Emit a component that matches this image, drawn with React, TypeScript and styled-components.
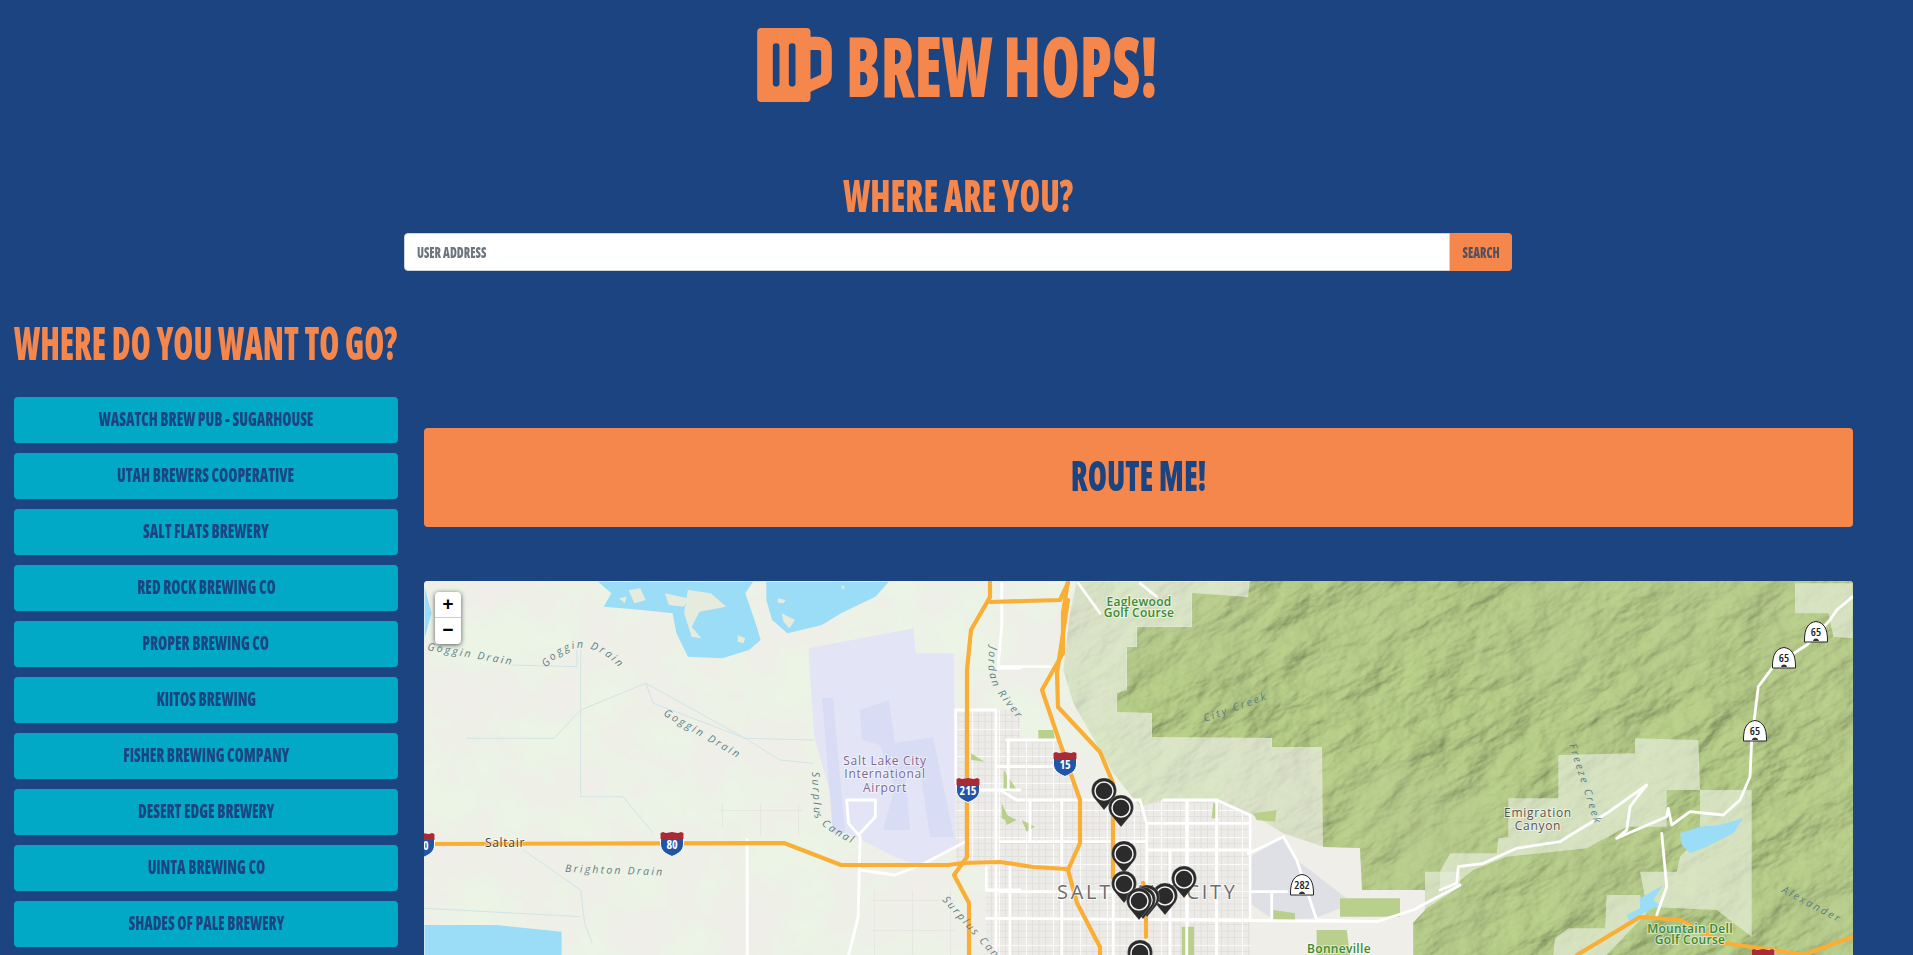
import styled, { createGlobalStyle } from "styled-components";

const NAVY = "#1b4480";
const ORANGE = "#f6874c";
const TEAL = "#01a9c7";

const GlobalStyle = createGlobalStyle`
  html, body {
    margin: 0;
    height: 955px;
    overflow: hidden;
    background: ${NAVY};
  }
  * { box-sizing: border-box; }
`;

const Page = styled.div`
  width: 1913px;
  height: 955px;
  overflow: hidden;
  background: ${NAVY};
  font-family: "Open Sans", "Liberation Sans", sans-serif;
  font-stretch: 75%;
  font-weight: 800;
`;

// no narrow display face on this machine, so squeeze the condensed one a bit more
const Condensed = styled.span<{ $x?: number; $origin?: string }>`
  display: inline-block;
  white-space: nowrap;
  transform: scaleX(${(p) => p.$x ?? 0.74});
  transform-origin: ${(p) => p.$origin ?? "center"};
`;

const Header = styled.header`
  display: flex;
  justify-content: center;
  align-items: center;
  padding-top: 28px;
  height: 102px;
  color: ${ORANGE};
`;

const Logo = styled.svg`
  width: 75px;
  height: 74px;
  flex: none;
  margin-right: 14px;
`;

const Title = styled.h1`
  margin: 0 2px 0 0;
  width: 308px;
  font-size: 84px;
  line-height: 74px;
  font-weight: 800;
  text-align: left;
`;

const AddressSection = styled.section`
  margin: 73px 0 0 404px;
  width: 1108px;
`;

const AddressTitle = styled.h2`
  margin: 0 0 19px;
  height: 39px;
  color: ${ORANGE};
  font-size: 45px;
  line-height: 39px;
  font-weight: 800;
  text-align: center;
  transform: translateX(0);
`;

const InputGroup = styled.div`
  display: flex;
  height: 38px;
`;

const AddressBox = styled.div`
  flex: 1;
  display: flex;
  align-items: center;
  padding: 0 12px 1px;
  background: #fff;
  border: 1px solid #ced4da;
  border-radius: 4px 0 0 4px;
  color: #6c757d;
  font-size: 16px;
`;

const SearchButton = styled.button`
  width: 62px;
  padding: 0 0 1px;
  border: 0;
  background: ${ORANGE};
  border-radius: 0 4px 4px 0;
  color: #555059;
  font: inherit;
  font-size: 16px;
`;

const Main = styled.main`
  display: grid;
  grid-template-columns: 384px 1429px;
  column-gap: 26px;
  padding-left: 14px;
  margin-top: 48px;
`;

const Sidebar = styled.aside`
  display: flex;
  flex-direction: column;
`;

const SideTitle = styled.h2`
  margin: 0 0 32px;
  height: 46px;
  color: ${ORANGE};
  font-size: 46px;
  line-height: 46px;
  font-weight: 800;
`;

const BreweryList = styled.div`
  display: flex;
  flex-direction: column;
  gap: 10px;
`;

const BreweryButton = styled.button`
  flex: none;
  height: 46px;
  padding: 0 0 3px;
  border: 0;
  border-radius: 4px;
  background: ${TEAL};
  color: ${NAVY};
  font: inherit;
  font-size: 20px;
`;

const Content = styled.div`
  padding-top: 109px;
  display: flex;
  flex-direction: column;
`;

const RouteButton = styled.button`
  height: 99px;
  margin-bottom: 54px;
  padding: 0 0 6px;
  border: 0;
  border-radius: 4px;
  background: ${ORANGE};
  color: ${NAVY};
  font: inherit;
  font-size: 42px;
`;

const MapFrame = styled.div`
  position: relative;
  height: 500px;
  border-radius: 4px;
  overflow: hidden;
  background: #efeee9;
`;

const MapSvg = styled.svg`
  display: block;
  width: 1429px;
  height: 500px;
`;

const ZoomControl = styled.div`
  position: absolute;
  left: 11px;
  top: 11px;
  width: 26px;
  border-radius: 4px;
  background: #fff;
  box-shadow: 0 1px 5px rgba(0, 0, 0, 0.65);
`;

const ZoomButton = styled.div<{ $last?: boolean }>`
  height: 26px;
  display: flex;
  align-items: center;
  justify-content: center;
  color: #000;
  font: 700 19px "Liberation Mono", monospace;
  border-bottom: ${(p) => (p.$last ? "none" : "1px solid #ccc")};
`;

const Road = styled.polyline<{ $w: number; $c: string }>`
  fill: none;
  stroke: ${(p) => p.$c};
  stroke-width: ${(p) => p.$w};
  stroke-linejoin: round;
  stroke-linecap: round;
`;

const WaterLabel = styled.text`
  font: italic 400 10.5px "Open Sans", sans-serif;
  letter-spacing: 2.2px;
  fill: #5f7f86;
`;

const PlaceLabel = styled.text<{ $c?: string; $bold?: boolean }>`
  font: ${(p) => (p.$bold ? 600 : 400)} 12px "Open Sans", sans-serif;
  letter-spacing: ${(p) => (p.$bold ? 0.3 : 0.7)}px;
  fill: ${(p) => p.$c ?? "#555"};
  text-anchor: middle;
  paint-order: stroke;
  stroke: rgba(255, 255, 255, 0.55);
  stroke-width: 2px;
`;

const CityLabel = styled.text`
  font: 400 20px "Open Sans", sans-serif;
  fill: #6d6d6d;
  paint-order: stroke;
  stroke: rgba(255, 255, 255, 0.7);
  stroke-width: 2px;
`;

const breweries = [
  "Wasatch Brew Pub - Sugarhouse",
  "Utah Brewers Cooperative",
  "Salt Flats Brewery",
  "Red Rock Brewing Co",
  "Proper Brewing Co",
  "Kiitos Brewing",
  "Fisher Brewing Company",
  "Desert Edge Brewery",
  "Uinta Brewing Co",
  "Shades of Pale Brewery",
];

// traced from crops of the map, so each helper maps crop px to page px
const crop = (ox: number, oy: number, sx = 3) => (s: string) =>
  s
    .trim()
    .split(/\s+/)
    .map((pair) => {
      const [x, y] = pair.split(",").map(Number);
      return `${(ox + x / sx).toFixed(1)},${(oy + y / 3).toFixed(1)}`;
    })
    .join(" ");
const z3 = crop(420, 570, 2.613);
const z4 = crop(1000, 570);
const z5 = crop(1440, 570);

const water = [
  z3("465,35 700,35 870,35 850,70 880,170 890,210 860,240 790,265 700,260 670,190 660,130 580,120 480,110 500,70"),
  z3("905,35 1225,35 1190,80 1100,130 1050,165 960,190 920,150 905,90"),
  z3("12,50 30,130 12,205"),
  z3("12,1065 200,1065 370,1085 370,1155 12,1155"),
  z5("720,790 780,770 840,765 910,745 880,790 800,830 750,850 725,825"),
  z5("600,985 670,945 640,990 660,1005 600,1035 570,1055 560,1035 600,1015"),
];

const islands = [
  z3("545,60 575,55 590,90 560,100"),
  z3("640,70 700,85 690,110 650,105"),
  z3("700,60 760,70 800,110 730,125 710,170 735,205 710,200 690,130"),
  z3("830,195 850,205 845,220 830,215"),
  z3("935,85 955,90 950,100 935,98"),
  z3("945,130 980,150 965,175 950,155"),
  z3("520,85 540,80 535,100"),
  z3("1100,45 1110,50 1105,60"),
];

const mountains =
  "1250,581 1248,597 1192,593 1192,627 1137,627 1137,647 1127,647 1127,690 1117,693 1117,712 1152,713 1152,737 1272,738 1272,747 1322,747 1323,847 1360,848 1362,890 1425,890 1425,910 1413,923 1413,955 1853,955 1853,581";

const foothills = z4(
  "230,35 750,35 745,80 575,70 575,170 410,170 410,230 380,230 380,360 350,370 350,425 455,430 455,500 815,505 815,530 965,530 970,830 850,790 750,730 640,690 490,690 420,710 340,610 220,400 190,300 210,130"
);

const lightPatches = [
  z5("0,905 30,850 170,850 175,805 205,800 205,685 355,685 355,555 585,550 585,505 775,510 780,660 680,660 680,770 560,770 440,835 200,860 100,900 50,940 0,955"),
  z5("780,660 935,660 935,1100 830,1020 620,1010 600,905 710,905 720,860 780,800"),
  z5("500,975 600,975 620,1030 500,1155 340,1155 345,1105 385,1075 495,1075"),
  z5("1065,40 1238,40 1238,205 1180,200 1165,130 1065,130"),
  z4("1020,980 1275,960 1275,905 1380,905 1380,950 1240,1040 1240,1155 1100,1155 1020,1060"),
];

const cityBlocks = [
  z4("20,510 170,510 240,690 420,710 490,690 650,690 750,735 750,1155 0,1155 0,590"),
  z3("1400,420 1568,420 1568,1155 1480,1155 1480,890 1400,890"),
];

const sparseLots = [
  z3("780,700 1000,700 1000,800 850,800 850,770 780,770"),
  z3("1180,960 1400,960 1400,1155 1180,1155"),
];

const parks = [
  z4("115,480 160,480 165,510 115,510"),
  z4("640,700 655,700 655,745 635,745"),
  z4("760,730 830,720 825,755 770,750"),
  z4("545,1070 582,1070 582,1155 545,1155"),
  z4("820,1020 885,1030 885,1050 820,1050"),
  z4("1020,985 1200,985 1200,1040 1020,1040"),
  z3("1440,550 1475,575 1440,570"),
  z3("1525,600 1560,660 1525,670"),
  z3("1520,700 1545,760 1520,745"),
  z4("950,1080 1040,1080 1050,1155 950,1155"),
  z4("10,730 50,750 20,765"),
  z4("65,750 105,770 80,785"),
];

const orangeRoads = [
  "424,844 784,843 841,865 948,865 963,863 1000,862 1033,867 1067,869",
  "990,581 990,597 971,630 967,670 967,857 954,875 969,903 969,955",
  "990,602 1060,600 1068,583",
  "1068,581 1063,613 1063,653 1042,690 1060,743 1080,800 1080,843 1068,870 1077,903 1100,947 1100,955",
  "1068,600 1057,673 1058,707 1100,752 1113,783 1113,878",
  "1143,883 1146,890 1146,937",
  "1577,955 1640,917 1680,920 1723,943 1773,950 1803,955 1852,937",
];

const whiteRoads = [
  z5("0,960 50,940 55,890 130,880 230,835 360,815 400,790 500,730 620,645 600,670 570,710 560,780 530,805 680,740 685,715 695,765 750,725 850,735 900,690 930,620 935,510 955,350 1000,290 1100,225 1170,150 1190,120 1238,80"),
  z5("665,790 680,950 650,1035"),
  z4("1380,945 1240,1020 1130,1055 950,1050 890,870 850,800 790,830 745,850"),
  z3("855,810 855,1155"),
  z3("1120,1155 1145,1040 1150,800 1120,760 1115,690 1190,690 1190,740 1150,790"),
  z3("1150,900 1240,915 1310,885 1425,815"),
  z3("1400,420 1505,420 1505,1155"),
  z3("1400,420 1400,640"),
  z3("1520,40 1520,170 1510,295 1568,295"),
  z3("1460,660 1568,660"),
  z3("1510,590 1568,590"),
  z3("1480,890 1480,960 1568,960"),
  z3("1480,1045 1568,1045"),
  z4("0,290 150,290"),
  z4("0,590 175,590"),
  z4("0,660 50,690 420,690 440,760 440,1155"),
  z4("0,815 440,815"),
  z4("20,510 165,510"),
  z4("25,510 25,660"),
  z4("90,690 90,815"),
  z4("185,690 185,1155"),
  z4("490,690 650,690 750,735 750,1050"),
  z4("440,760 750,760"),
  z4("440,840 750,840"),
  z4("0,1045 1130,1055"),
  z4("0,965 440,965"),
  z4("30,880 30,1155"),
  z4("560,690 560,1155"),
  z4("650,690 650,1155"),
  z4("510,840 510,1155"),
  z4("340,690 340,1155"),
  z4("750,965 860,965"),
  z4("815,965 815,1050"),
  z4("235,40 300,130"),
  z4("420,40 470,80"),
];

const Pin = ({ x, y }: { x: number; y: number }) => (
  <g transform={`translate(${x} ${y})`}>
    <path
      d="M0 19 L-9.5 7.5 A12.5 12.5 0 1 1 9.5 7.5 Z"
      fill="#2b2b2b"
      stroke="#fff"
      strokeOpacity=".35"
      strokeWidth=".6"
    />
    <circle r="9" fill="#2b2b2b" stroke="#f1f1f1" strokeWidth="1.5" />
  </g>
);

const InterstateShield = ({ x, y, n }: { x: number; y: number; n: string }) => (
  <g transform={`translate(${x} ${y})`}>
    <path
      d="M-11.5 -11 H11.5 V0 C11.5 7 6 10 0 12.5 C-6 10 -11.5 7 -11.5 0 Z"
      fill="#2355a6"
      stroke="#fff"
      strokeWidth="1"
    />
    <path d="M-11.5 -5 V-11 L-9 -12 L-6 -11 L0 -12 L6 -11 L9 -12 L11.5 -11 V-5 Z" fill="#a82b35" />
    <text y="5" textAnchor="middle" fontWeight="700" fontSize="12" fill="#fff">
      {n}
    </text>
  </g>
);

const UtahShield = ({ x, y, n }: { x: number; y: number; n: string }) => (
  <g transform={`translate(${x} ${y})`}>
    <path
      d="M-11.5 10 V8 C-11.5 -3 -8 -9.5 0 -10.5 C8 -9.5 11.5 -3 11.5 8 V10 Z"
      fill="#fff"
      stroke="#222"
      strokeWidth="1"
    />
    <path d="M-3 9 C-3 5.5 3 5.5 3 9 Z" fill="#333" />
    <text y="4" textAnchor="middle" fontWeight="600" fontSize="11.5" fill="#222">
      {n}
    </text>
  </g>
);

const CurvedLabel = ({ id, d, text }: { id: string; d: string; text: string }) => (
  <>
    <path id={id} d={d} fill="none" />
    <WaterLabel>
      <textPath href={`#${id}`}>{text}</textPath>
    </WaterLabel>
  </>
);

const MapDrawing = () => (
  <MapSvg viewBox="424 581 1429 500">
    <defs>
      <filter id="blotch" x="424" y="581" width="800" height="400" filterUnits="userSpaceOnUse">
        <feTurbulence type="fractalNoise" baseFrequency="0.018" numOctaves="4" seed="5" />
        <feColorMatrix values="0 0 0 0 .84  0 0 0 0 .9  0 0 0 0 .79  1.6 0 0 0 -.28" />
        <feComponentTransfer>
          <feFuncA type="discrete" tableValues="0 .3 .75 1" />
        </feComponentTransfer>
      </filter>
      <filter id="hill" x="900" y="250" width="1250" height="1050" filterUnits="userSpaceOnUse">
        <feTurbulence type="fractalNoise" baseFrequency="0.013 0.026" numOctaves="5" seed="11" />
        <feDiffuseLighting surfaceScale="8.5" diffuseConstant="1.1" lightingColor="#b4ca86">
          <feDistantLight azimuth="225" elevation="60" />
        </feDiffuseLighting>
      </filter>
      <filter id="shade" x="1100" y="581" width="753" height="400" filterUnits="userSpaceOnUse">
        <feTurbulence type="fractalNoise" baseFrequency="0.006" numOctaves="2" seed="3" />
        <feColorMatrix values="0 0 0 0 .5  0 0 0 0 .61  0 0 0 0 .3  2.4 0 0 0 -.8" />
      </filter>
      <clipPath id="mountainClip">
        <polygon points={mountains} />
      </clipPath>
      <clipPath id="footClip">
        <polygon points={foothills} />
      </clipPath>
      <pattern id="blocks" width="27" height="27" patternUnits="userSpaceOnUse">
        <rect width="27" height="27" fill="#edebe8" />
        <path d="M6.5 0V27M13 0V27M19.5 0V27M0 6.5H27M0 13H27M0 19.5H27" stroke="#e2e0dd" strokeWidth="1" />
        <path d="M0 0H27M0 0V27" stroke="#fff" strokeWidth="1.6" />
      </pattern>
      <pattern id="lots" width="38" height="30" patternUnits="userSpaceOnUse">
        <path d="M0 0H38M0 0V30" stroke="#e0ded9" strokeWidth="1" fill="none" />
      </pattern>
    </defs>

    <rect x="424" y="581" width="1429" height="500" fill="#efeee9" />
    <rect x="424" y="581" width="800" height="400" filter="url(#blotch)" />

    <g clipPath="url(#footClip)" opacity=".34">
      <rect x="900" y="250" width="1250" height="1050" transform="rotate(-28 1500 775)" filter="url(#hill)" />
    </g>
    <g clipPath="url(#mountainClip)">
      <rect x="900" y="250" width="1250" height="1050" transform="rotate(-28 1500 775)" filter="url(#hill)" />
      <rect x="1100" y="581" width="753" height="400" filter="url(#shade)" opacity=".45" />
      {lightPatches.map((points) => (
        <polygon key={points} points={points} fill="#e6eeda" opacity=".68" />
      ))}
    </g>

    <polygon
      points={z3("1015,235 1290,175 1295,250 1395,250 1400,790 1420,815 1300,885 1240,860 1100,780 1030,500")}
      fill="#e3e5f6"
    />
    <path
      d="M822 698 H833 L845 833 H833 Z M860 710 L889 700 L895 743 L933 737 L954 837 H930 L920 770 H905 L910 830 H883 L895 787 L880 745 L862 740 Z"
      fill="#d8dcf4"
    />

    {water.map((points) => (
      <polygon key={points} points={points} fill="#9bdcf6" />
    ))}
    {islands.map((points) => (
      <polygon key={points} points={points} fill="#e6ecdd" />
    ))}

    <g fill="none" stroke="#cfe4e6" strokeWidth="1">
      <polyline points={z3("120,505 350,505 420,420 590,340 850,505 1030,510")} />
      <polyline points={z3("590,340 610,400 850,505 940,570 1030,580")} />
      <polyline points={z3("420,240 420,680 530,680 610,790")} />
      <polyline points={z3("240,285 410,290 410,240")} />
      <polyline points={z3("270,840 420,960 430,1060 450,1120")} />
      <polyline points={z3("12,1015 420,1040")} />
    </g>

    {sparseLots.map((points) => (
      <polygon key={points} points={points} fill="url(#lots)" />
    ))}
    {cityBlocks.map((points) => (
      <polygon key={points} points={points} fill="url(#blocks)" />
    ))}

    <polygon
      points={z4("750,860 850,800 890,870 1060,1000 945,1045 820,1050 750,1000")}
      fill="#dfe0e5"
    />
    {parks.map((points) => (
      <polygon key={points} points={points} fill="#b8d08b" />
    ))}

    {whiteRoads.map((points) => (
      <Road key={points} points={points} $w={2.8} $c="#fff" />
    ))}
    {orangeRoads.map((points) => (
      <Road key={points} points={points} $w={4.2} $c="#f9ae35" />
    ))}

    <WaterLabel transform="translate(427 650) rotate(10)">Goggin Drain</WaterLabel>
    <CurvedLabel id="g1" d="M546 668 Q585 622 630 680" text="Goggin Drain" />
    <WaterLabel transform="translate(663 715) rotate(30)">Goggin Drain</WaterLabel>
    <WaterLabel transform="translate(565 872) rotate(2)">Brighton Drain</WaterLabel>
    <CurvedLabel id="g2" d="M812 772 L814 815 Q820 830 870 852" text="Surplus Canal" />
    <WaterLabel transform="translate(942 900) rotate(48)">Surplus Canal</WaterLabel>
    <CurvedLabel id="g3" d="M990 646 Q985 670 995 690 L1030 735" text="Jordan River" />
    <WaterLabel transform="translate(1205 722) rotate(-20)">City Creek</WaterLabel>
    <WaterLabel transform="translate(1569 745) rotate(72)">Freeze Creek</WaterLabel>
    <WaterLabel transform="translate(1781 892) rotate(28)">Alexander</WaterLabel>

    <PlaceLabel x="885" y="765" $c="#7a688f">Salt Lake City</PlaceLabel>
    <PlaceLabel x="885" y="778" $c="#7a688f">International</PlaceLabel>
    <PlaceLabel x="885" y="792" $c="#7a688f">Airport</PlaceLabel>
    <PlaceLabel x="505" y="847" $c="#444">Saltair</PlaceLabel>
    <PlaceLabel x="1139" y="606" $c="#3c8a2e" $bold>Eaglewood</PlaceLabel>
    <PlaceLabel x="1139" y="617" $c="#3c8a2e" $bold>Golf Course</PlaceLabel>
    <PlaceLabel x="1339" y="953" $c="#3c8a2e" $bold>Bonneville</PlaceLabel>
    <PlaceLabel x="1538" y="817">Emigration</PlaceLabel>
    <PlaceLabel x="1538" y="830">Canyon</PlaceLabel>
    <PlaceLabel x="1690" y="933" $c="#3c8a2e" $bold>Mountain Dell</PlaceLabel>
    <PlaceLabel x="1690" y="944" $c="#3c8a2e" $bold>Golf Course</PlaceLabel>
    <CityLabel x="1057" y="899" textLength="178">SALT LAKE CITY</CityLabel>

    <InterstateShield x={968} y={790} n="215" />
    <InterstateShield x={672} y={844} n="80" />
    <InterstateShield x={423} y={845} n="80" />
    <InterstateShield x={1065} y={764} n="15" />
    <InterstateShield x={1763} y={961} n="80" />
    <UtahShield x={1816} y={632} n="65" />
    <UtahShield x={1784} y={658} n="65" />
    <UtahShield x={1755} y={731} n="65" />
    <UtahShield x={1302} y={885} n="282" />

    <Pin x={1104} y={791} />
    <Pin x={1121} y={808} />
    <Pin x={1124} y={854} />
    <Pin x={1184} y={879} />
    <Pin x={1124} y={884} />
    <Pin x={1165} y={896} />
    <Pin x={1147} y={898} />
    <Pin x={1143} y={900} />
    <Pin x={1139} y={901} />
    <Pin x={1140} y={953} />
  </MapSvg>
);

const App = () => (
  <Page>
    <GlobalStyle />
    <Header>
      <Logo viewBox="173 84 224 222">
        <path
          fillRule="evenodd"
          fill={ORANGE}
          d="M185 84 H321 Q333 84 333 96 V110 H350 Q397 110 397 157 V225 Q397 247 376 256 L333 275 V294 Q333 306 321 306 H185 Q173 306 173 294 V96 Q173 84 185 84 Z M230 130 Q220 130 220 140 V250 Q220 260 230 260 Q240 260 240 250 V140 Q240 130 230 130 Z M278 130 Q268 130 268 140 V250 Q268 260 278 260 Q288 260 288 250 V140 Q288 130 278 130 Z M333 150 V238 L360 226 Q365 224 365 218 V157 Q365 150 358 150 Z"
        />
      </Logo>
      <Title>
        <Condensed $origin="left">BREW HOPS!</Condensed>
      </Title>
    </Header>

    <AddressSection>
      <AddressTitle>
        <Condensed>WHERE ARE YOU?</Condensed>
      </AddressTitle>
      <InputGroup>
        <AddressBox>
          <Condensed $origin="left">USER ADDRESS</Condensed>
        </AddressBox>
        <SearchButton>
          <Condensed>SEARCH</Condensed>
        </SearchButton>
      </InputGroup>
    </AddressSection>

    <Main>
      <Sidebar>
        <SideTitle>
          <Condensed $x={0.702} $origin="left">WHERE DO YOU WANT TO GO?</Condensed>
        </SideTitle>
        <BreweryList>
          {breweries.map((name) => (
            <BreweryButton key={name}>
              <Condensed>{name.toUpperCase()}</Condensed>
            </BreweryButton>
          ))}
        </BreweryList>
      </Sidebar>
      <Content>
        <RouteButton>
          <Condensed>ROUTE ME!</Condensed>
        </RouteButton>
        <MapFrame>
          <MapDrawing />
          <ZoomControl>
            <ZoomButton>+</ZoomButton>
            <ZoomButton $last>−</ZoomButton>
          </ZoomControl>
        </MapFrame>
      </Content>
    </Main>
  </Page>
);

export default App;
